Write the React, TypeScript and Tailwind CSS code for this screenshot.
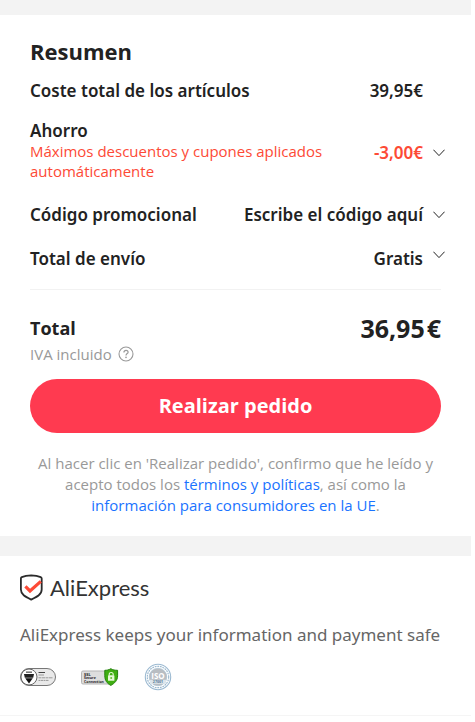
import type { ReactNode } from 'react'

const BODY_FONT = "font-['Open_Sans','Noto_Sans',sans-serif]"
const LABEL_FONT = "font-['Noto_Sans','Open_Sans',sans-serif]"

function Chevron() {
  return (
    <svg viewBox="0 0 12 8" className="h-2 w-3 shrink-0" fill="none" stroke="#222222" strokeWidth="1" aria-hidden="true">
      <path d="M0.4 0.7 L6 6.6 L11.6 0.7" />
    </svg>
  )
}

function Row({ label, children }: { label: string; children: ReactNode }) {
  return (
    <div className="flex items-center justify-between gap-2">
      <span>{label}</span>
      {children}
    </div>
  )
}

function HelpIcon() {
  return (
    <svg viewBox="0 0 16 16" className="size-4" fill="none" stroke="#999999" aria-hidden="true">
      <circle cx="8" cy="8" r="7" strokeWidth="1.1" />
      <path d="M5.9 6.4 C5.9 5 6.8 4.3 8 4.3 C9.2 4.3 10.1 5.1 10.1 6.2 C10.1 7.5 8 7.7 8 9.4" strokeWidth="1.2" />
      <circle cx="8" cy="11.4" r="0.8" fill="#999999" stroke="none" />
    </svg>
  )
}

function ShieldLogo() {
  return (
    <svg viewBox="0 0 24 27" className="h-[27px] w-6" fill="none" aria-hidden="true">
      <path
        d="M11.2 1.4 C8 1.5 4.2 2.1 1.8 3.1 C1.1 3.4 0.9 3.8 0.9 4.5 V15.5 C0.9 20.5 5 22.6 11.2 25.6 C17.4 22.6 21.7 20.5 21.7 15.5 V4.5 C21.7 3.8 21.4 3.4 20.7 3.1 C18.2 2.1 14.4 1.5 11.2 1.4 Z"
        stroke="#2b2b2b"
        strokeWidth="1.8"
      />
      <path d="M5.4 12.4 L10 17 L20.8 7.4" stroke="#fd4a36" strokeWidth="3.2" />
    </svg>
  )
}

function PciBadge() {
  return (
    <svg viewBox="0 0 36 18" className="h-[18px] w-9" role="img" aria-label="Information security management">
      <rect x="0.5" y="0.5" width="35" height="17" rx="8.5" fill="#e9e9e9" stroke="#777777" />
      <circle cx="9" cy="9" r="8" fill="#ffffff" stroke="#666666" />
      <path d="M6 3.4 H12 V5 H6 Z" fill="#777777" />
      <path d="M4 6 H14 L13.2 9.8 H4.8 Z" fill="#222222" />
      <path d="M5.2 10.2 H12.8 L9 15.4 Z" fill="#111111" />
      <g stroke="#999999" strokeWidth="1">
        <path d="M18.5 4.5 H25" stroke="#444444" />
        <path d="M18.5 7 H24" />
        <path d="M18.5 9.8 H33" strokeDasharray="3 0.5" />
        <path d="M18.5 12.4 H29" strokeDasharray="2 0.5" />
      </g>
    </svg>
  )
}

function SslBadge() {
  return (
    <svg viewBox="0 0 38 18" className="h-[18px] w-[38px]" role="img" aria-label="SSL secure connection">
      <rect x="0.5" y="3" width="31" height="13" rx="1.5" fill="#dedede" stroke="#b5b5b5" />
      <g fill="#222222" fontFamily="Open Sans, sans-serif" fontWeight="700">
        <text x="3" y="7.8" fontSize="4">SSL</text>
        <text x="3" y="11.3" fontSize="3.5">Secure</text>
        <text x="3" y="14.9" fontSize="3.5">Connection</text>
      </g>
      <path d="M29.8 0.7 C27.8 2 25.8 2.3 23.8 2.3 V7.8 C23.8 12.5 26.2 15.5 29.8 17.4 C33.4 15.5 36.6 12.5 36.6 7.8 V2.3 C34 2.3 31.8 2 29.8 0.7 Z" fill="#3fae10" stroke="#23810b" />
      <path d="M28.2 7.5 V6.5 C28.2 3.8 32.2 3.8 32.2 6.5 V7.5" fill="none" stroke="#e5f9d5" strokeWidth="1.1" />
      <rect x="27" y="7.3" width="6.4" height="5.5" rx="0.6" fill="#e5f9d5" />
      <circle cx="30.2" cy="10" r="1" fill="#66bb33" />
    </svg>
  )
}

function IsoBadge() {
  return (
    <svg viewBox="0 0 28 28" className="size-7" role="img" aria-label="ISO 27001">
      <circle cx="14" cy="14" r="12.7" fill="#ffffff" stroke="#9bb9d1" strokeWidth="1.1" />
      <circle cx="14" cy="14" r="10.7" fill="none" stroke="#9dbad0" strokeWidth="1.2" strokeDasharray="1.8 0.8" />
      <circle cx="14" cy="14" r="8.8" fill="#b9bdc2" stroke="#a5bfd2" strokeWidth="0.6" />
      <rect x="6" y="16.8" width="16" height="4" fill="#dce5ec" />
      <g textAnchor="middle" fontFamily="Open Sans, sans-serif" fontWeight="700">
        <text x="14" y="15.5" fontSize="8" fill="#ffffff">ISO</text>
        <text x="14" y="20.4" fontSize="3.6" fill="#557892">27001</text>
      </g>
    </svg>
  )
}

function Summary() {
  return (
    <section className="px-[30px] pt-5 pb-5">
      <h1 className="text-[22px] leading-8 font-bold">Resumen</h1>

      <div className={`${LABEL_FONT} -mr-1 pt-3 text-[17px] leading-6 font-semibold`}>
        <div className="pr-[22px]">
          <Row label="Coste total de los artículos">
            <span>39,95€</span>
          </Row>
        </div>

        <div className="mt-[18px] flex items-end justify-between">
          <div className="flex-1">
            <p className="leading-5">Ahorro</p>
            <p className={`${BODY_FONT} max-w-[310px] text-[15px] leading-5 font-normal text-[#fd4a36]`}>
              Máximos descuentos y cupones aplicados automáticamente
            </p>
          </div>
          <button type="button" aria-label="Ver ahorro" className="mb-4 flex items-center gap-2.5 text-[#fd4a36]">
            -3,00€
            <Chevron />
          </button>
        </div>

        <div className="mt-[22px]">
          <Row label="Código promocional">
            <button type="button" className="flex items-center gap-2.5">
              Escribe el código aquí
              <Chevron />
            </button>
          </Row>
        </div>

        <div className="mt-5">
          <Row label="Total de envío">
            <button type="button" className="flex items-start gap-2.5">
              Gratis
              <span className="pt-1">
                <Chevron />
              </span>
            </button>
          </Row>
        </div>
      </div>

      <hr className="mt-[18px] border-[#f2f2f2]" />

      <div className="mt-5 flex items-start justify-between">
        <div>
          <p className="pt-1 text-lg leading-7 font-bold">Total</p>
          <p className="flex items-center gap-1.5 text-[15px] leading-6 text-[#999999]">
            IVA incluido
            <HelpIcon />
          </p>
        </div>
        <p className="flex gap-0.5 text-[25px] leading-9 font-bold">
          <span>36,95</span>
          <span>€</span>
        </p>
      </div>

      <button type="button" className="mt-[13px] h-[54px] w-full rounded-full bg-[#ff3a50] text-xl font-bold text-white">
        Realizar pedido
      </button>

      <p className="mt-5 text-center text-[15px] leading-[21px] text-[#999999]">
        Al hacer clic en 'Realizar pedido', confirmo que he leído y acepto todos los{' '}
        <a href="#terminos" className="text-[#1a73ff]">términos y políticas</a>, así como la{' '}
        <a href="#consumidores" className="text-[#1a73ff]">información para consumidores en la UE</a>.
      </p>
    </section>
  )
}

function Security() {
  return (
    <section className="border-b border-[#f5f5f5] px-5 pt-[18px] pb-6">
      <div className="flex items-center gap-1.5">
        <ShieldLogo />
        <span className="font-[Lato,'Open_Sans',sans-serif] text-[22px] leading-[26px] text-[#333333]">AliExpress</span>
      </div>
      <p className={`${LABEL_FONT} mt-[22px] text-[17px] leading-6 text-[#666666]`}>
        AliExpress keeps your information and payment safe
      </p>
      <div className="mt-4 flex items-center gap-[25px]">
        <PciBadge />
        <SslBadge />
        <IsoBadge />
      </div>
    </section>
  )
}

export default function App() {
  return (
    <main className={`${BODY_FONT} bg-white pr-1 text-[#222222]`}>
      <div className="h-[15px] bg-[#f3f3f3]" />
      <Summary />
      <div className="h-5 bg-[#f3f3f3]" />
      <Security />
    </main>
  )
}
